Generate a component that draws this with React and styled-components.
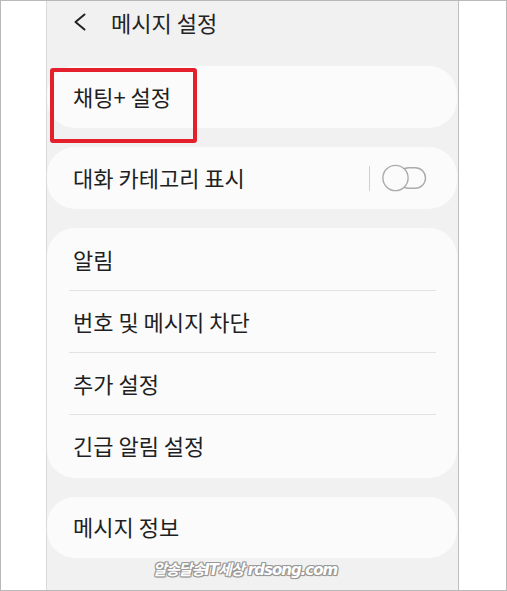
import React from 'react'
import styled, { createGlobalStyle } from 'styled-components'

const GlobalStyle = createGlobalStyle`
  html, body {
    margin: 0;
    padding: 0;
    background: #ffffff;
  }
  * {
    box-sizing: border-box;
  }
`

const Frame = styled.div`
  width: 507px;
  height: 591px;
  border: 1px solid #b9b9b9;
  background: #ffffff;
  padding-left: 45px;
  font-family: 'Noto Sans CJK KR', 'Noto Sans', sans-serif;
  overflow: hidden;
`

const Phone = styled.div`
  width: 413px;
  height: 100%;
  background: #f1f1f1;
  border-left: 1px solid #dadada;
  border-right: 1px solid #bfbfbf;
  display: flex;
  flex-direction: column;
`

const Header = styled.div`
  height: 65px;
  flex-shrink: 0;
  display: flex;
  align-items: flex-start;
  padding: 7px 0 0 26px;
  gap: 24px;
`

const BackButton = styled.div`
  width: 14px;
  height: 28px;
  display: flex;
  align-items: center;
  justify-content: center;
`

const Title = styled.h1`
  margin: 0;
  font-size: 22px;
  font-weight: 400;
  color: #242424;
  line-height: 28px;
`

const List = styled.div`
  display: flex;
  flex-direction: column;
  gap: 19px;
  padding-right: 1px;
`

const Card = styled.div`
  position: relative;
  background: #fbfbfb;
  border-radius: 28px;
  padding: ${p => (p.group ? '1px 0' : '0')};
`

const Row = styled.div`
  height: ${p => p.h || 62}px;
  display: flex;
  align-items: center;
  padding: 0 30px 0 26px;
  position: relative;
  &:after {
    content: '';
    display: ${p => (p.divided ? 'block' : 'none')};
    position: absolute;
    left: 22px;
    right: 21px;
    bottom: 0;
    height: 1px;
    background: #e3e3e3;
  }
`

const Label = styled.span`
  flex: 1;
  font-size: 22px;
  color: #1f1f1f;
  line-height: 1;
  padding-bottom: 3px;
`

const Separator = styled.div`
  width: 1px;
  height: 25px;
  background: #d0d0d0;
  margin-right: 12px;
`

const Highlight = styled.div`
  position: absolute;
  left: 3px;
  top: 2px;
  width: 147px;
  height: 75px;
  border: 4px solid #e3202b;
  border-radius: 3px;
  pointer-events: none;
`

const Watermark = styled.div`
  padding-left: 106px;
  font-family: 'DejaVu Sans', 'Noto Sans CJK KR', sans-serif;
  font-size: 15px;
  font-weight: 700;
  font-style: italic;
  letter-spacing: -1px;
  color: #ffffff;
  text-shadow: 1px 0 0 #9a9a9a, -1px 0 0 #9a9a9a, 0 1px 0 #9a9a9a, 0 -1px 0 #9a9a9a,
    1px 1px 1px #808080, -1px 1px 0 #9a9a9a, 1px -1px 0 #9a9a9a, -1px -1px 0 #9a9a9a;
  white-space: nowrap;
`

const Toggle = () => (
  <svg width="45" height="28" viewBox="0 0 45 28">
    <rect x="16.5" y="3.8" width="27" height="20.4" rx="10.2" fill="none" stroke="#ababab" strokeWidth="1.4" />
    <circle cx="13.5" cy="14" r="12.6" fill="#fbfbfb" stroke="#ababab" strokeWidth="1.4" />
  </svg>
)

const Chevron = () => (
  <svg width="14" height="18" viewBox="0 0 14 18">
    <path d="M11.5 1.5 L2.5 9 L11.5 16.5" fill="none" stroke="#222" strokeWidth="2" strokeLinecap="round" strokeLinejoin="round" />
  </svg>
)

const groupItems = ['알림', '번호 및 메시지 차단', '추가 설정', '긴급 알림 설정']

const App = () => {
  return (
    <>
      <GlobalStyle />
      <Frame>
        <Phone>
          <Header>
            <BackButton>
              <Chevron />
            </BackButton>
            <Title>메시지 설정</Title>
          </Header>
          <List>
            <Card>
              <Row>
                <Label>채팅+ 설정</Label>
              </Row>
              <Highlight />
            </Card>
            <Card>
              <Row>
                <Label>대화 카테고리 표시</Label>
                <Separator />
                <Toggle />
              </Row>
            </Card>
            <Card group>
              {groupItems.map((item, i) => (
                <Row key={item} divided={i < groupItems.length - 1}>
                  <Label>{item}</Label>
                </Row>
              ))}
            </Card>
            <Card>
              <Row h={61}>
                <Label>메시지 정보</Label>
              </Row>
            </Card>
          </List>
          <Watermark>알송달송IT세상 rdsong.com</Watermark>
        </Phone>
      </Frame>
    </>
  )
}

export default App
